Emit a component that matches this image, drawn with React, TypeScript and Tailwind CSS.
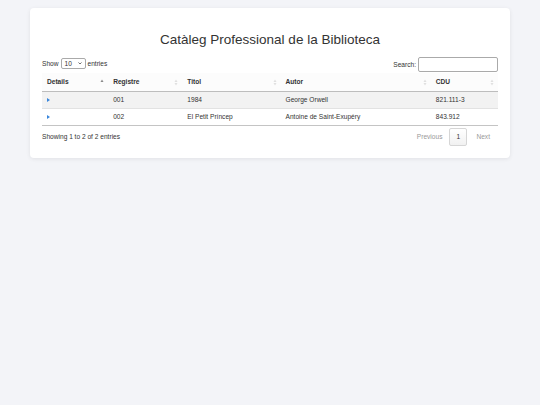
import React from 'react';

type Col = { label: string; width: string; sort: 'asc' | 'both' };

const columns: Col[] = [
  { label: 'Details', width: 'w-[66px]', sort: 'asc' },
  { label: 'Registre', width: 'w-[74px]', sort: 'both' },
  { label: 'Titol', width: 'w-[98px]', sort: 'both' },
  { label: 'Autor', width: 'w-[150px]', sort: 'both' },
  { label: 'CDU', width: 'w-[67px]', sort: 'both' },
];

const rows = [
  { registre: '001', titol: '1984', autor: 'George Orwell', cdu: '821.111-3' },
  { registre: '002', titol: 'El Petit Príncep', autor: 'Antoine de Saint-Exupéry', cdu: '843.912' },
];

function SortIcon({ sort }: { sort: 'asc' | 'both' }) {
  return (
    <svg width="4" height="7" viewBox="0 0 4 7" className="absolute right-[4px] top-[6px]">
      <path d="M2 0.5 L3.5 3 L0.5 3 Z" fill={sort === 'asc' ? '#8a8a8a' : '#e0e0e0'} />
      {sort === 'both' && <path d="M0.5 4 L3.5 4 L2 6.5 Z" fill="#e0e0e0" />}
    </svg>
  );
}

function DetailsToggle() {
  return (
    <svg width="3" height="4" viewBox="0 0 3 4" className="block">
      <path d="M0 0 L3 2 L0 4 Z" fill="#3a86db" />
    </svg>
  );
}

export default function App() {
  return (
    <div className="min-h-[405px] w-[540px] bg-[#f3f4f8] pt-[8px] font-['Liberation_Sans',Arial,sans-serif] text-[#333]">
      <div className="mx-[30px] w-[480px] rounded-[4px] bg-white px-[12px] pt-[24px] pb-[12px] shadow-[0_1px_4px_rgba(0,0,0,0.08)]">
        {/* Title */}
        <h1 className="text-center text-[13.5px] leading-[16px] text-[#333]">
          Catàleg Professional de la Biblioteca
        </h1>

        {/* Length + search controls */}
        <div className="mt-[9px] flex h-[16px] items-start justify-between text-[6.6px]">
          <div className="flex items-center gap-[2px] pt-[1px]">
            <span>Show</span>
            <div className="flex h-[11px] w-[25px] items-center justify-between rounded-[2px] border border-[#aaa] bg-white px-[3px]">
              <span>10</span>
              <svg width="4" height="3" viewBox="0 0 4 3">
                <path d="M0.5 0.5 L2 2 L3.5 0.5" stroke="#333" strokeWidth="0.7" fill="none" />
              </svg>
            </div>
            <span>entries</span>
          </div>
          <div className="flex items-center gap-[2px]">
            <span>Search:</span>
            <div className="h-[15px] w-[80px] rounded-[2px] border border-[#aaa] bg-white" />
          </div>
        </div>

        {/* Table */}
        <table className="w-[456px] table-fixed border-collapse text-[6.6px]">
          <thead>
            <tr className="bg-[#fcfcfc]">
              {columns.map((c) => (
                <th
                  key={c.label}
                  className={`${c.width} relative h-[18px] border-b border-[#bdbdbd] pl-[5px] text-left align-middle font-bold`}
                >
                  {c.label}
                  <SortIcon sort={c.sort} />
                </th>
              ))}
            </tr>
          </thead>
          <tbody>
            {rows.map((r, i) => (
              <tr
                key={r.registre}
                className={`${i % 2 === 0 ? 'bg-[#f2f2f2]' : 'bg-white'} ${i > 0 ? 'border-t border-[#e2e2e2]' : ''}`}
              >
                <td className="h-[17px] pl-[5px] align-middle">
                  <DetailsToggle />
                </td>
                <td className="pl-[5px] align-middle">{r.registre}</td>
                <td className="pl-[5px] align-middle">{r.titol}</td>
                <td className="pl-[5px] align-middle">{r.autor}</td>
                <td className="pl-[5px] align-middle">{r.cdu}</td>
              </tr>
            ))}
          </tbody>
        </table>
        <div className="h-px w-[456px] bg-[#c4c4c4]" />

        {/* Info + pagination */}
        <div className="mt-[2px] flex h-[18px] w-[456px] items-center justify-between text-[6.6px]">
          <span>Showing 1 to 2 of 2 entries</span>
          <div className="flex items-center">
            <span className="px-[4px] text-[#999]">Previous</span>
            <span className="ml-[3px] mr-[5px] flex h-[18px] w-[18px] items-center justify-center rounded-[2px] border border-[#d6d6d6] bg-gradient-to-b from-white to-[#f1f1f1]">
              1
            </span>
            <span className="pl-[4px] pr-[8px] text-[#999]">Next</span>
          </div>
        </div>
      </div>
    </div>
  );
}
